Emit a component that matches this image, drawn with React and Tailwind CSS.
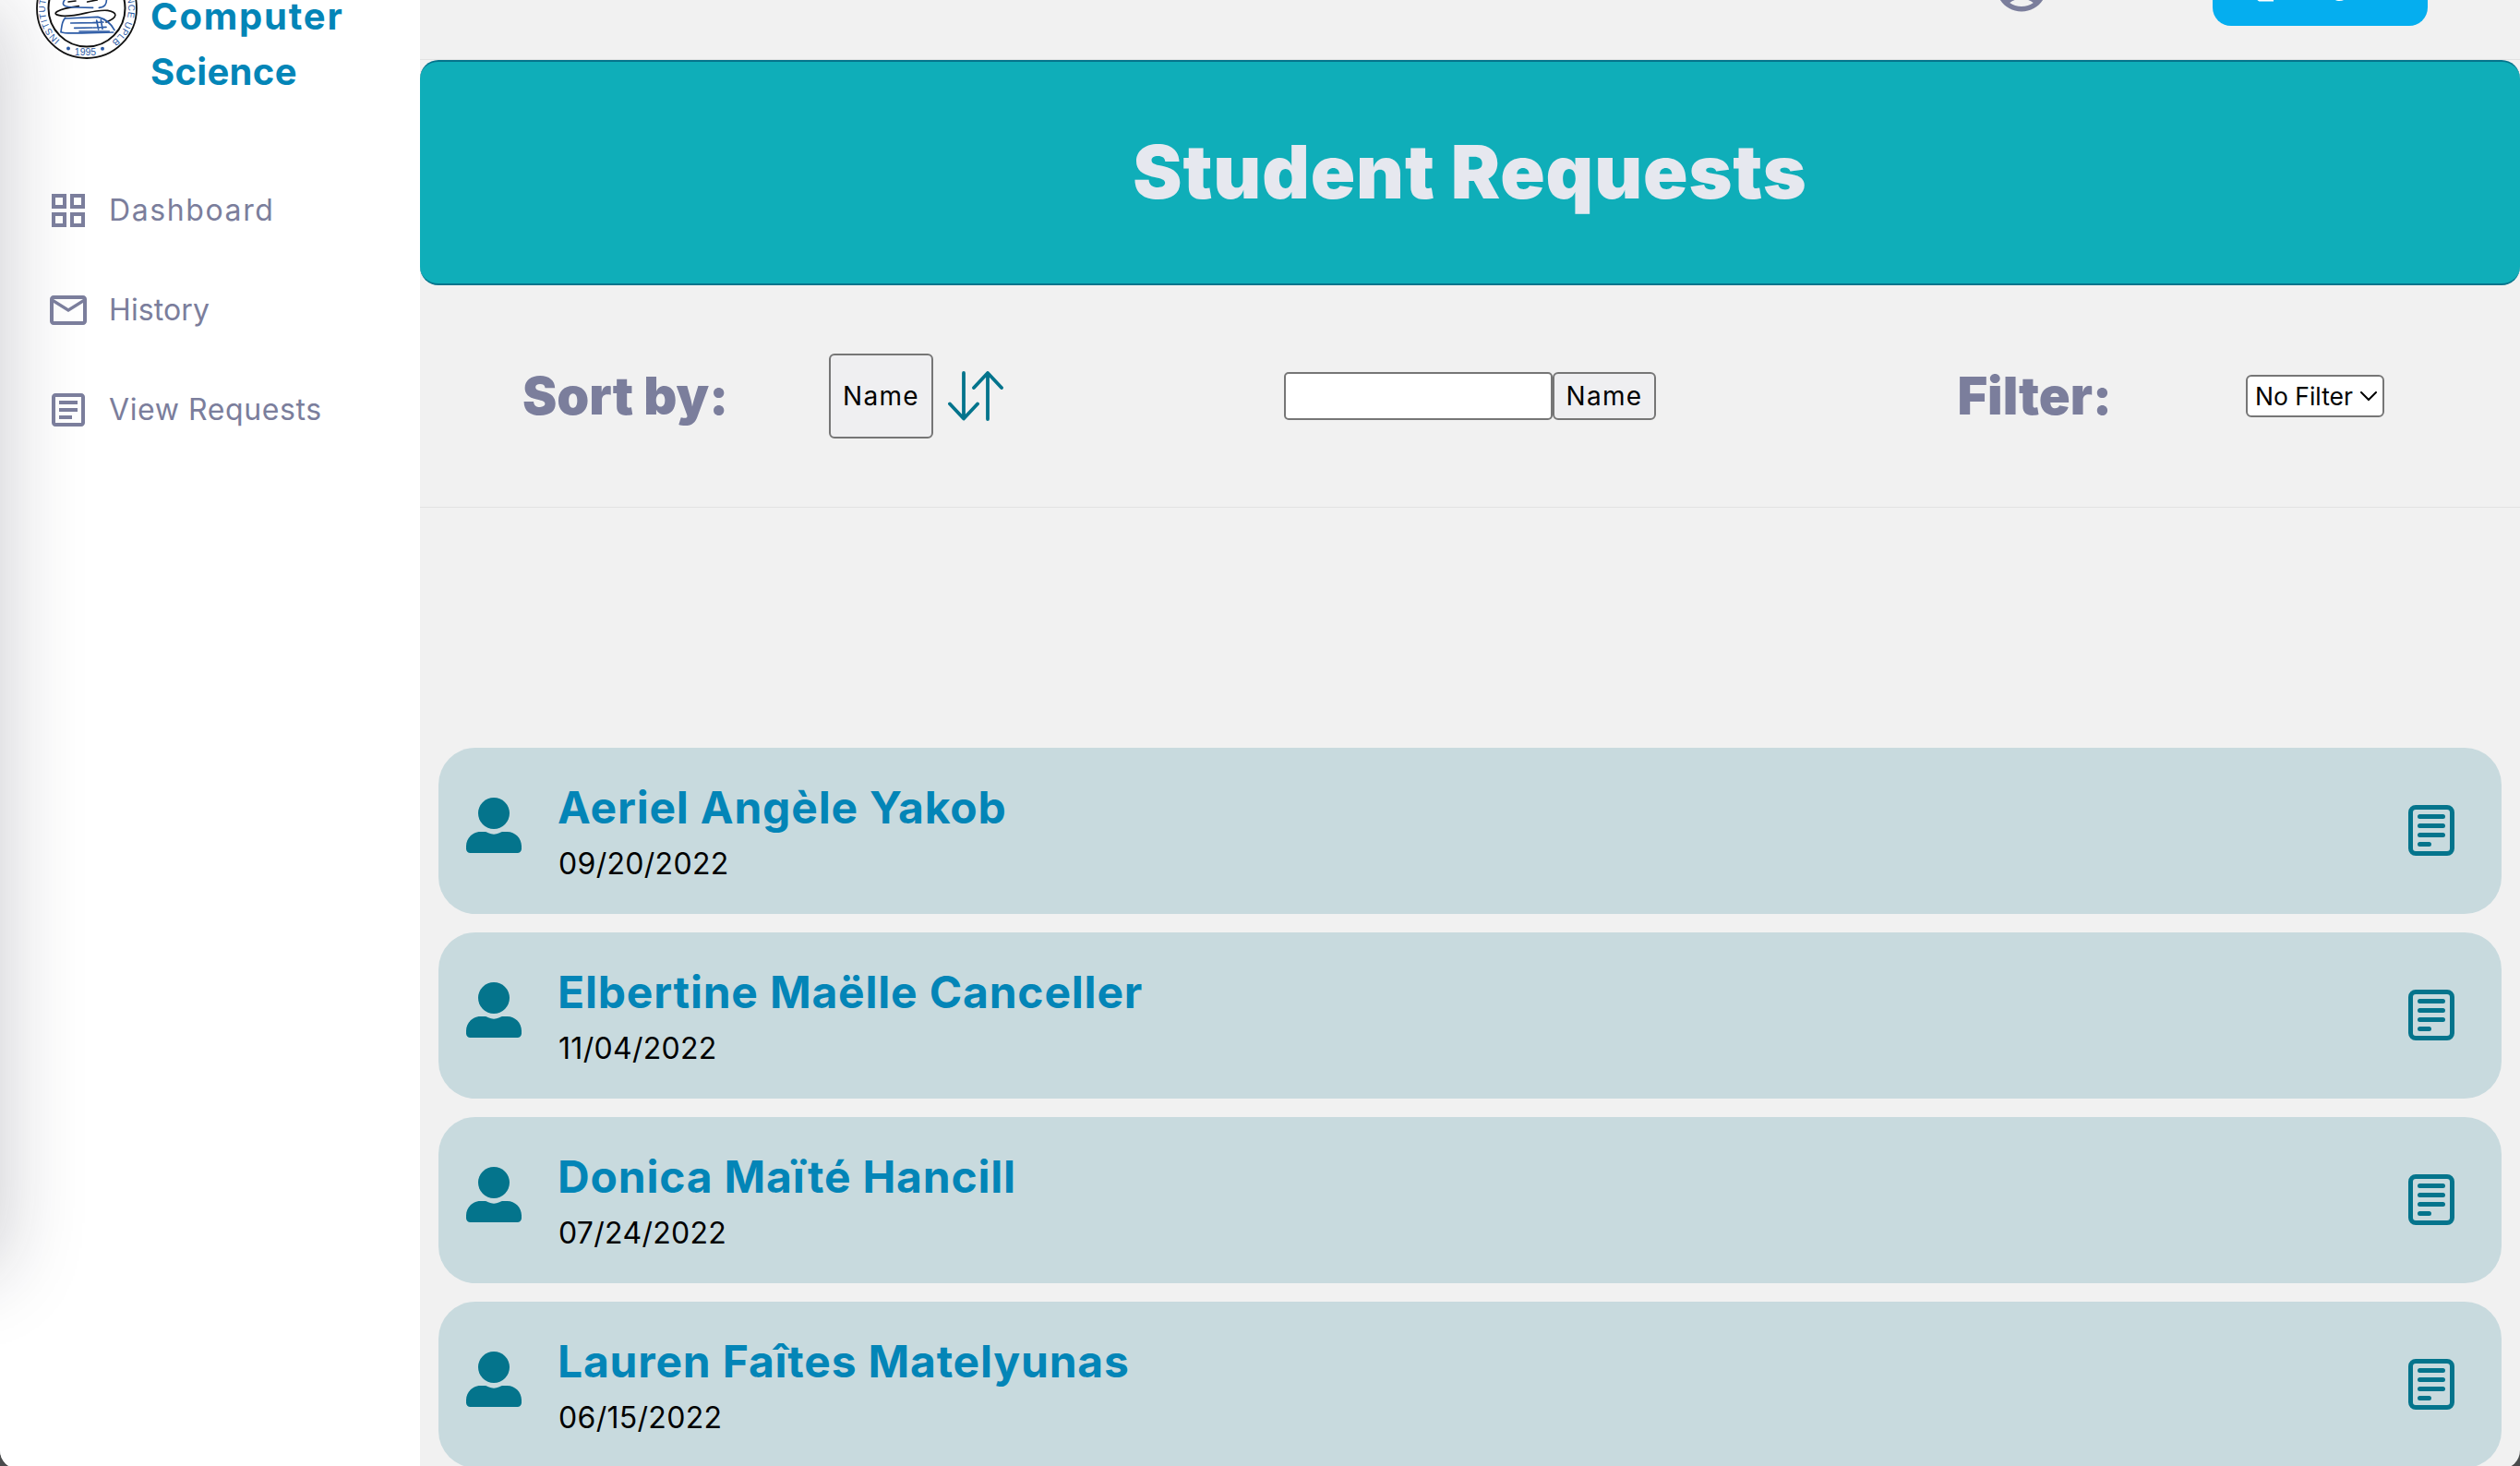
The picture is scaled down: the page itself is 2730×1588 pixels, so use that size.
import React, { useState } from 'react'
import { MdOutlineGridView, MdMailOutline, MdOutlineArticle, MdOutlineAccountCircle, MdLogout } from 'react-icons/md'

const navItems = [
  { label: 'Dashboard', icon: MdOutlineGridView, tracking: 'tracking-[1.6px]' },
  { label: 'History', icon: MdMailOutline, tracking: 'tracking-[0.1px]' },
  { label: 'View Requests', icon: MdOutlineArticle, tracking: 'tracking-[0.6px]' }
]

const requests = [
  { id: 1, name: 'Aeriel Angèle Yakob', date: '09/20/2022' },
  { id: 2, name: 'Elbertine Maëlle Canceller', date: '11/04/2022' },
  { id: 3, name: 'Donica Maïté Hancill', date: '07/24/2022' },
  { id: 4, name: 'Lauren Faîtes Matelyunas', date: '06/15/2022' }
]

const Logo = () => (
  <svg width="110" height="110" viewBox="0 0 110 110" fill="none" className="shrink-0 mb-[44px]">
    <circle cx="55" cy="55" r="54" fill="#fff" stroke="#111" strokeWidth="1.8" />
    <circle cx="55" cy="55" r="41.5" stroke="#111" strokeWidth="2" />
    <defs>
      <path id="ring" d="M26.1 89.5 A45 45 0 1 1 83.9 89.5" />
    </defs>
    <text fill="#2b5aa5" fontSize="10" fontFamily="Liberation Sans, sans-serif">
      <textPath href="#ring" textLength="222">INSTITUTE OF COMPUTER SCIENCE UPLB</textPath>
    </text>
    <text x="53.5" y="105.5" textAnchor="middle" fill="#2b5aa5" fontSize="10.5" fontFamily="Liberation Sans, sans-serif">1995</text>
    <circle cx="35" cy="98.5" r="2" fill="#2b5aa5" />
    <circle cx="72" cy="98.8" r="2" fill="#2b5aa5" />
    {/* stacked books and the snake */}
    <g transform="translate(0 46) scale(0.3333) translate(-117 0)" strokeWidth="5" strokeLinecap="round">
      <path stroke="#111" d="M256 20C190 28 150 48 210 52C265 52 300 30 350 34C385 40 382 58 345 72M222 6L246 3M284 6L316 0" />
      <path stroke="#2b5aa5" d="M214 -6C198 14 200 24 250 24L302 25M346 -6C348 14 340 24 322 25M212 58C200 70 200 92 198 104C215 110 245 108 368 105M212 60C260 58 290 56 318 55C345 62 362 78 372 98" />
      <path stroke="#2b5aa5" d="M230 75L304 74M242 91L300 90M258 102L355 102M314 66L320 96M328 64L333 94M302 74L336 72M304 90L345 88" />
    </g>
  </svg>
)

const UserIcon = () => (
  <svg width="60" height="60" viewBox="0 0 60 60" fill="#04748c" className="shrink-0">
    <circle cx="30" cy="17" r="17" />
    <path d="M15.5 37H19.5C21.5 37 22.5 37.5 24 38.3A14 14 0 0 0 36 38.3C37.5 37.5 38.5 37 40.5 37H44.5C53 37 60 44 60 52.5V55.5A4.5 4.5 0 0 1 55.5 60H4.5A4.5 4.5 0 0 1 0 55.5V52.5C0 44 7 37 15.5 37Z" />
  </svg>
)

const FormIcon = () => (
  <svg width="50" height="55" viewBox="0 0 50 55" fill="none" stroke="#04748c" strokeWidth="5" strokeLinecap="round">
    <rect x="2.5" y="2.5" width="45" height="50" rx="5.5" />
    <path d="M12.5 12.5H37.5M12.5 22.5H37.5M12.5 32.5H37.5M12.5 42.5H22.5" />
  </svg>
)

const SortIcon = () => (
  <svg width="60" height="54" viewBox="0 0 60 54" fill="none" stroke="#04748c" strokeWidth="3.8" strokeLinecap="round" strokeLinejoin="round">
    <path d="M17 2V51M2 35.5L17 51.5L32 35.5" />
    <path d="M43 52V2.5M28 18L43 2L58 18" />
  </svg>
)

const Sidebar = () => (
  <aside className="relative w-[455px] shrink-0 bg-white overflow-hidden">
    <div className="absolute -left-[300px] top-[10px] w-[300px] h-[1365px] shadow-[0_0_85px_rgba(20,20,45,0.23)]" />
    <div className="relative flex items-end h-[108px] pl-[39px]">
      <Logo />
      <div className="ml-[14px] text-[40px] leading-[60px] font-bold text-[#0385b7]">
        <p className="tracking-[1.8px]">Computer</p>
        <p className="tracking-[0.3px]">Science</p>
      </div>
    </div>
    <nav className="relative mt-24 pl-[50px] flex flex-col gap-[60px]">
      {navItems.map((item) => {
        const Icon = item.icon
        return (
          <a key={item.label} className="flex items-center h-12 text-[#7b7e9c]">
            <Icon size={48} />
            <span className={`ml-5 text-[32px] ${item.tracking}`}>{item.label}</span>
          </a>
        )
      })}
    </nav>
  </aside>
)

const RequestCard = ({ request }) => (
  <li className="flex items-start h-[180px] shrink-0 rounded-[40px] bg-[#c8dade] pl-[30px] pr-[51px]">
    <div className="mt-[54px]">
      <UserIcon />
    </div>
    <div className="flex-1 ml-[38px] mt-[35px]">
      <h3 className="ml-[1px] text-[48px] leading-[60px] font-bold tracking-[0.8px] text-[#0385b7]">{request.name}</h3>
      <p className="mt-[7px] ml-[2px] text-[32px] leading-[48px] tracking-[0.3px] text-black">{request.date}</p>
    </div>
    <button className="mt-[62px]">
      <FormIcon />
    </button>
  </li>
)

const App = () => {
  const [search, setSearch] = useState('')

  return (
    <div className="h-[1588px] overflow-hidden bg-[#4a4b4c] font-['Inter',sans-serif]">
      <div className="flex h-[1591px] rounded-b-[20px] overflow-hidden bg-[#f1f1f1]">
        <Sidebar />

        <main className="flex-1 flex flex-col">
          {/* Top bar */}
          <header className="flex items-end justify-end h-[65px] shrink-0 pr-[100px] border-b border-[#e2e2e2] overflow-hidden">
            <MdOutlineAccountCircle size={66} className="mb-[46px] mr-[174px] shrink-0 text-[#7b7e9c]" />
            <button className="flex items-center justify-center gap-2 w-[233px] h-[92px] mb-[36px] pt-1.5 shrink-0 rounded-[20px] bg-[#05aeef] text-white text-[28px]">
              <MdLogout size={44} />
              Logout
            </button>
          </header>

          {/* Banner */}
          <div className="flex items-center justify-center h-[244px] shrink-0 pb-[2px] rounded-[20px] border-y-2 border-[#04748c] bg-[#0faeb9]">
            <h1 className="text-[80px] font-black tracking-[0.9px] text-[#e6e8ef]">Student Requests</h1>
          </div>

          {/* Sort, search and filter */}
          <div className="flex items-center h-[241px] shrink-0 pl-[111px] pr-[147px] border-b border-[#e2e2e2] text-[28px] text-black">
            <h2 className="w-[332px] text-[56px] font-black text-[#7b7e9c]">Sort by:</h2>
            <button className="w-[113px] h-[92px] border-2 border-[#767676] rounded-md bg-[#efeff1] tracking-[1.3px]">Name</button>
            <div className="ml-4">
              <SortIcon />
            </div>
            <input
              value={search}
              onChange={(e) => setSearch(e.target.value)}
              className="ml-[304px] w-[291px] h-[52px] px-2 border-2 border-[#767676] rounded-[5px] bg-white outline-none"
            />
            <button className="w-[112px] h-[52px] border-2 border-[#767676] rounded-md bg-[#efeff1] tracking-[1.3px]">Name</button>
            <h2 className="ml-auto text-[56px] font-black text-[#7b7e9c]">Filter:</h2>
            <div className="relative ml-[145px] w-[150px] h-[46px]">
              <select className="appearance-none w-full h-full pl-[8px] pt-px text-[26.5px] leading-none border-2 border-[#767676] rounded-md bg-white">
                <option>No Filter</option>
              </select>
              <svg width="18" height="11" viewBox="0 0 18 11" fill="none" stroke="#000" strokeWidth="2" className="absolute right-2 top-[18px]">
                <path d="M1 1L9 9L17 1" strokeLinecap="round" />
              </svg>
            </div>
          </div>

          {/* Requests */}
          <ul className="flex flex-col gap-5 mt-[260px] px-5">
            {requests.map((request) => (
              <RequestCard key={request.id} request={request} />
            ))}
          </ul>
        </main>
      </div>
    </div>
  )
}

export default App
